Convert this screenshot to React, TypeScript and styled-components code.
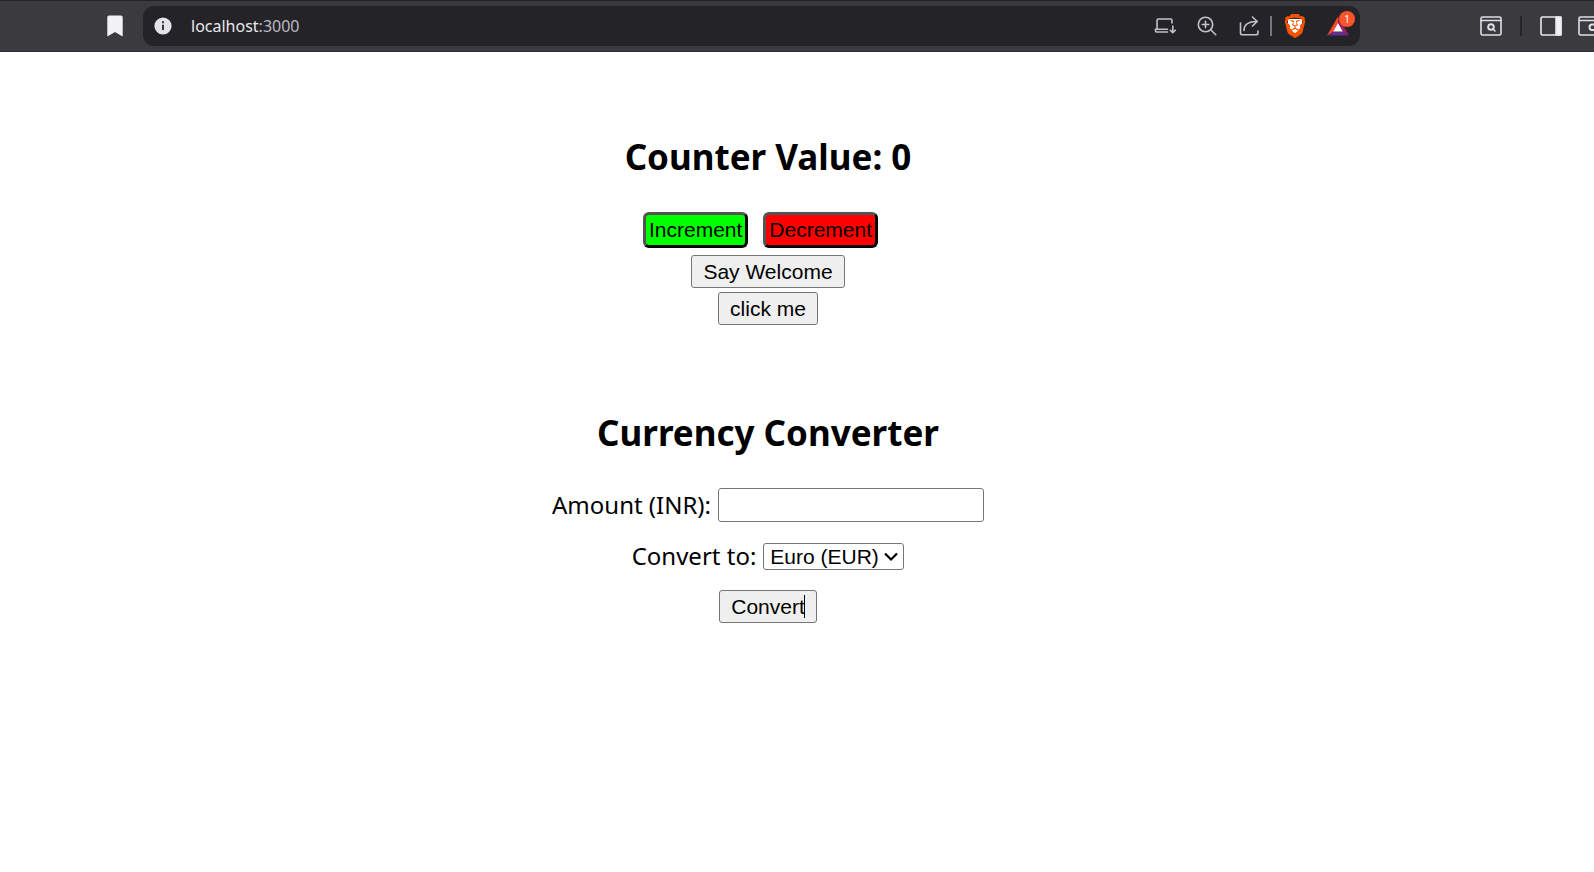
import React, { useState } from "react";
import styled, { createGlobalStyle } from "styled-components";
import { SiBrave } from "react-icons/si";

const GlobalStyle = createGlobalStyle`
  *, *::before, *::after { box-sizing: border-box; }
  body { margin: 0; background: #fff; color: #000; font-family: "Segoe UI", "Noto Sans", sans-serif; overflow-x: hidden; }
`;

const Toolbar = styled.header`
  display: flex;
  align-items: center;
  height: 52px;
  padding-left: 98px;
  overflow: hidden;
  background: #3b3a3f;
  border-top: 1px solid #232227;
  border-bottom: 1px solid #2b2a2e;
`;

const IconButton = styled.button<{ $width?: number }>`
  position: relative;
  display: flex;
  flex: none;
  align-items: center;
  justify-content: center;
  width: ${({ $width = 42 }) => $width}px;
  height: 38px;
  padding: 0;
  border: 0;
  background: none;
  color: #c3c2c8;
`;

const WalletButton = styled(IconButton)`
  justify-content: flex-start;
  margin-left: 6px;
  overflow: hidden;
  & > svg { flex: none; }
`;

const AddressBar = styled.div`
  display: flex;
  flex: 1;
  align-items: center;
  min-width: 0;
  height: 40px;
  margin-left: 11px;
  border-radius: 11px;
  background: #242328;
`;

const Address = styled.a`
  flex: 1;
  min-width: 0;
  padding-left: 8px;
  overflow: hidden;
  color: #e9e9ee;
  font-size: 16px;
  line-height: 24px;
  text-decoration: none;
`;

const Port = styled.span`
  color: #bbbac2;
`;

const Separator = styled.span<{ $color: string }>`
  flex: none;
  width: 2px;
  height: 20px;
  background: ${({ $color }) => $color};
`;

const ShieldIcon = styled.span`
  display: grid;
  & > * { grid-area: 1 / 1; }
`;

const Badge = styled.span`
  position: absolute;
  top: 4px;
  right: 3px;
  width: 16px;
  height: 16px;
  border-radius: 8px;
  background: #fb542b;
  color: #fff;
  font-family: "Noto Sans", sans-serif;
  font-size: 10px;
  line-height: 16px;
  text-align: center;
`;

const WindowTools = styled.div`
  display: flex;
  flex: none;
  align-items: center;
  justify-content: flex-end;
  width: 234px;
`;

const Page = styled.main`
  display: flex;
  flex-direction: column;
  gap: 78px;
  padding: 79px 58px 40px 0;
`;

const Section = styled.section`
  display: flex;
  flex-direction: column;
  align-items: center;
`;

const Form = styled.form`
  display: flex;
  flex-direction: column;
  align-items: center;
`;

const Heading = styled.h2`
  margin: 0 0 29px;
  font-size: 35px;
  font-weight: 700;
  line-height: 52px;
`;

const CounterButtons = styled.div`
  display: flex;
  gap: 15px;
  margin: 0 15px 7px 0;
`;

const CounterButton = styled.button<{ $color: string }>`
  height: 36px;
  padding: 0 3px;
  border: 3px outset #000;
  border-radius: 6px;
  background: ${({ $color }) => $color};
  color: #000;
  font-family: Arial, "Liberation Sans", sans-serif;
  font-size: 21px;
`;

const Button = styled.button`
  position: relative;
  height: 33px;
  margin-bottom: 4px;
  padding: 0 11px;
  border: 1px solid #767676;
  border-radius: 3px;
  background: #efefef;
  color: #000;
  font-family: Arial, "Liberation Sans", sans-serif;
  font-size: 21px;
`;

const Caret = styled.span`
  position: absolute;
  top: 4px;
  right: 11px;
  width: 1px;
  height: 23px;
  background: #000;
`;

const Field = styled.div`
  display: flex;
  align-items: center;
  gap: 7px;
  margin-bottom: 18px;
`;

const Label = styled.label`
  font-size: 24px;
  line-height: 32px;
`;

const AmountInput = styled.input`
  width: 266px;
  height: 34px;
  padding: 2px;
  border: 1px solid #767676;
  border-radius: 3px;
  font-family: Arial, "Liberation Sans", sans-serif;
  font-size: 21px;
  appearance: textfield;
`;

const SelectBox = styled.span`
  position: relative;
  display: flex;
`;

const Chevron = styled.svg`
  position: absolute;
  top: 9px;
  right: 6px;
  pointer-events: none;
`;

const CurrencySelect = styled.select`
  width: 141px;
  height: 27px;
  padding: 0 6px;
  border: 1px solid #767676;
  border-radius: 3px;
  background-color: #fff;
  color: #000;
  font-family: Arial, "Liberation Sans", sans-serif;
  font-size: 21px;
  appearance: none;
`;

const stroke = { fill: "none", stroke: "currentColor", strokeWidth: 1.6, strokeLinecap: "round", strokeLinejoin: "round" } as const;

export default function App() {
  const [count, setCount] = useState(0);
  const [amount, setAmount] = useState("");

  return (
    <>
      <GlobalStyle />
      <Toolbar>
        <IconButton $width={34} aria-label="Bookmarks">
          <svg width="16" height="22" viewBox="0 0 16 22">
            <path d="M2 .5h12q1.7 0 1.7 1.700V20.500q0 1.200-1 .6L8 17l-6.700 4.100q-1 .6-1-.6V2.200Q.3.5 2 .5z" fill="#f2f2f5" />
          </svg>
        </IconButton>
        <AddressBar>
          <IconButton $width={40} aria-label="Site information">
            <svg width="18" height="18" viewBox="0 0 18 18">
              <circle cx="9" cy="9" r="8.600" fill="#e4e3e9" />
              <path d="M8 4.200h2v2H8zM8 7.800h2V13H8z" fill="#35343a" />
            </svg>
          </IconButton>
          <Address href="http://localhost:3000">
            localhost<Port>:3000</Port>
          </Address>
          <IconButton aria-label="Install app">
            <svg width="22" height="20" viewBox="0 0 22 20" {...stroke}>
              <path d="M3 12.500V4.500Q3 3 4.500 3h12Q18 3 18 4.500V7M1.500 13.200h12M1.500 13.500v1.500q0 1 1 1h11M18.800 10v6.500M16.300 14.200l2.500 2.500 2.500-2.500" />
            </svg>
          </IconButton>
          <IconButton aria-label="Zoom">
            <svg width="20" height="20" viewBox="0 0 20 20" {...stroke}>
              <circle cx="8.500" cy="8.500" r="7.200" />
              <path d="M13.700 13.700 18.800 18.800M5.200 8.500h6.600M8.500 5.200v6.600" />
            </svg>
          </IconButton>
          <IconButton aria-label="Share">
            <svg width="20" height="20" viewBox="0 0 20 20" {...stroke}>
              <path d="M1.500 7v9.700q0 2.100 2.100 2.100h13.300Q19 18.800 19 16.700V15M5 14.500C5 8.500 8.500 5.500 18 5.500M13.500 1l4.700 4.500-4.700 4.500" />
            </svg>
          </IconButton>
          <Separator $color="#77767c" />
          <IconButton $width={46} aria-label="Brave Shields">
            <ShieldIcon>
              <svg width="24" height="24" viewBox="0 0 24 24">
                <path d="M5 5h14v9l-4 5-3 2.500L9 19l-4-5z" fill="#fff" />
              </svg>
              <SiBrave size={24} color="#fb5200" />
            </ShieldIcon>
          </IconButton>
          <IconButton $width={40} aria-label="Brave Rewards, 1 notification">
            <svg width="22" height="20" viewBox="0 0 22 20">
              <path d="M11 .5 0 19.500 6.500 15.500 11 7z" fill="#ff4724" />
              <path d="M11 .5 22 19.500 15.500 15.500 11 7z" fill="#9e1f63" />
              <path d="M0 19.500h22l-6.500-4h-9z" fill="#662d91" />
              <path d="m11 7 4.800 8.500H6.200z" fill="#fff" />
            </svg>
            <Badge>1</Badge>
          </IconButton>
          <Separator $color="transparent" />
        </AddressBar>
        <WindowTools>
          <IconButton aria-label="Search tabs">
            <svg width="22" height="20" viewBox="0 0 22 20" {...stroke} stroke="#dfdee4">
              <rect x="1" y="1" width="20" height="18" rx="1.500" />
              <path d="M1 4.500h20M13 13l2 2" />
              <circle cx="11" cy="11" r="2.800" strokeWidth="2" />
            </svg>
          </IconButton>
          <IconButton as="span" $width={18}>
            <Separator $color="#242328" />
          </IconButton>
          <IconButton aria-label="Show sidebar">
            <svg width="22" height="20" viewBox="0 0 22 20" {...stroke} stroke="#e8e8ed">
              <rect x="1" y="1" width="20" height="18" rx="1.500" />
              <path d="M16 1h5v18h-5z" fill="#f2f2f5" />
            </svg>
          </IconButton>
          <WalletButton $width={16} aria-label="Wallet">
            <svg width="22" height="20" viewBox="0 0 22 20" {...stroke} stroke="#dfdee4">
              <path d="M22 1H2.500Q1 1 1 2.500v15Q1 19 2.500 19H22M1 4.500h21" />
              <path d="M21 8.500h-7q-2.500 0-2.500 2.700t2.500 2.700h7" strokeWidth="2" />
            </svg>
          </WalletButton>
        </WindowTools>
      </Toolbar>
      <Page>
        <Section>
          <Heading>Counter Value: {count}</Heading>
          <CounterButtons>
            <CounterButton $color="#00ff00" onClick={() => setCount(count + 1)}>Increment</CounterButton>
            <CounterButton $color="#ff0000" onClick={() => setCount(count - 1)}>Decrement</CounterButton>
          </CounterButtons>
          <Button>Say Welcome</Button>
          <Button>click me</Button>
        </Section>
        <Section>
          <Heading>Currency Converter</Heading>
          <Form onSubmit={(e) => e.preventDefault()}>
            <Field>
              <Label htmlFor="amount">Amount (INR):</Label>
              <AmountInput id="amount" type="number" value={amount} onChange={(e) => setAmount(e.target.value)} />
            </Field>
            <Field>
              <Label htmlFor="currency">Convert to:</Label>
              <SelectBox>
                <CurrencySelect id="currency">
                  <option>Euro (EUR)</option>
                </CurrencySelect>
                <Chevron width="14" height="10" viewBox="0 0 14 10" fill="none" stroke="#000" strokeWidth="2.200">
                  <path d="m1 1.500 6 6 6-6" />
                </Chevron>
              </SelectBox>
            </Field>
            <Button type="submit">
              Convert
              <Caret />
            </Button>
          </Form>
        </Section>
      </Page>
    </>
  );
}
